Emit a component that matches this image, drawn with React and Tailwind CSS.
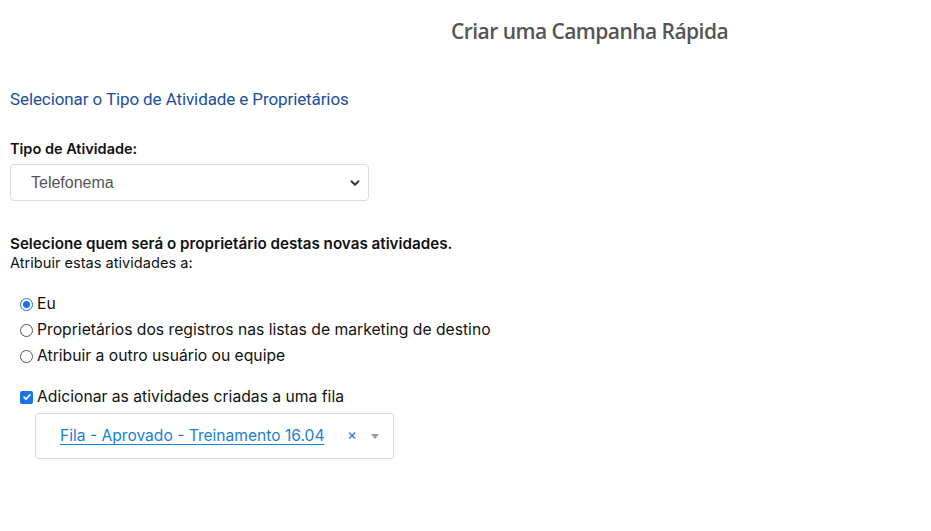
import React from 'react'

const radios = [
    { label: 'Eu', checked: true },
    { label: 'Proprietários dos registros nas listas de marketing de destino', checked: false },
    { label: 'Atribuir a outro usuário ou equipe', checked: false },
]

const Radio = ({ checked }) => (
    <span className={`w-[13px] h-[13px] rounded-full border flex items-center justify-center shrink-0 ${checked ? 'border-[#1a73e8]' : 'border-[#555]'}`}>
        {checked && <span className="w-[7px] h-[7px] rounded-full bg-[#1a73e8]" />}
    </span>
)

export default function App() {
    return (
        <div className="w-[931px] h-[531px] bg-white font-['Inter',sans-serif] text-[#111]">
            <div className="pt-[18px] pl-[451px]">
                <h1 className="font-['Open_Sans',sans-serif] font-semibold text-[21px] leading-[26px] text-[#555] tracking-[-0.55px]">Criar uma Campanha Rápida</h1>
            </div>

            <div className="px-[10px]">
                <p className="mt-[45px] font-['Roboto',sans-serif] text-[17px] leading-[20px] text-[#1b4f9c] tracking-[-0.1px]">
                    Selecionar o Tipo de Atividade e Proprietários
                </p>

                <p className="mt-[31px] text-[14.5px] leading-[18px] font-semibold">Tipo de Atividade:</p>
                <div className="mt-[6px] w-[359px] h-[37px] border border-[#dcdcdc] rounded-[4px] flex items-center justify-between pl-[20px] pr-[6px]">
                    <span className="font-['Liberation_Sans',sans-serif] text-[16px] text-[#555]">Telefonema</span>
                    <svg width="14" height="14" viewBox="0 0 24 24" fill="none" stroke="#333" strokeWidth="3.2" strokeLinecap="round" strokeLinejoin="round">
                        <path d="M6 9l6 6 6-6" />
                    </svg>
                </div>

                <p className="mt-[33px] text-[15.2px] leading-[19px] font-semibold">Selecione quem será o proprietário destas novas atividades.</p>
                <p className="text-[14.6px] leading-[21px]">Atribuir estas atividades a:</p>

                <div className="mt-[20px] pl-[10px] flex flex-col gap-[6px]">
                    {radios.map((r) => (
                        <label key={r.label} className="flex items-center gap-[4px] text-[15.7px] leading-[20px]">
                            <Radio checked={r.checked} />
                            <span>{r.label}</span>
                        </label>
                    ))}
                </div>

                <div className="mt-[21px] pl-[10px]">
                    <label className="flex items-center gap-[4px] text-[15.7px] leading-[20px]">
                        <span className="w-[13px] h-[13px] rounded-[2px] bg-[#1a73e8] flex items-center justify-center">
                            <svg width="10" height="10" viewBox="0 0 12 12" fill="none" stroke="white" strokeWidth="2" strokeLinecap="round" strokeLinejoin="round">
                                <path d="M2.5 6.2l2.3 2.3 4.7-5" />
                            </svg>
                        </span>
                        <span>Adicionar as atividades criadas a uma fila</span>
                    </label>
                    <div className="mt-[6px] ml-[15px] w-[359px] h-[46px] border border-[#d9d9d9] rounded-[3px] flex items-center pl-[24px] pr-[14px]">
                        <a className="text-[15.6px] text-[#1a7fd6] underline underline-offset-[3px]">Fila - Aprovado - Treinamento 16.04</a>
                        <span className="ml-auto -mt-[3px] text-[#1a7fd6] text-[15px] leading-none">×</span>
                        <span className="ml-[14px] w-0 h-0 border-l-[4px] border-r-[4px] border-t-[5px] border-l-transparent border-r-transparent border-t-[#999]" />
                    </div>
                </div>
            </div>
        </div>
    )
}
